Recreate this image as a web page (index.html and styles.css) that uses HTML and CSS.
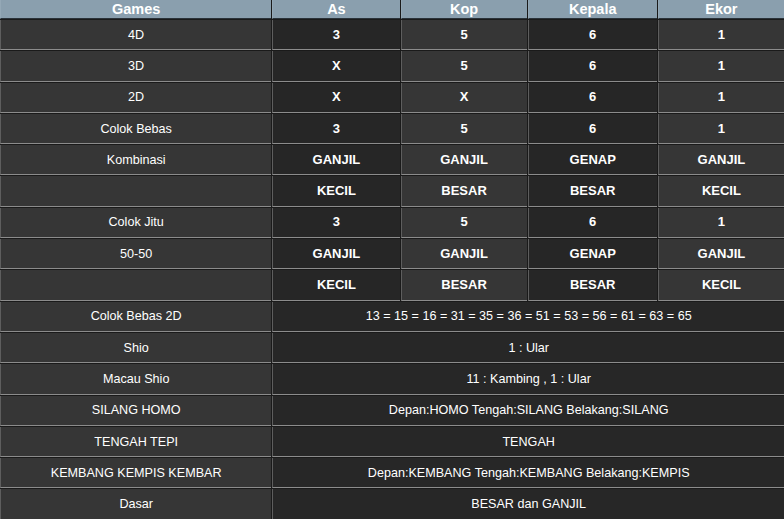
FILE: index.html
```html
<!DOCTYPE html>
<html>
<head>
<meta charset="utf-8">
<link rel="stylesheet" href="styles.css">
</head>
<body>
<table class="result">
  <thead>
    <tr><th class="c-game">Games</th><th class="c-as">As</th><th class="c-kop">Kop</th><th class="c-kep">Kepala</th><th class="c-ekor">Ekor</th></tr>
  </thead>
  <tbody>
    <tr><td class="name">4D</td><td class="v dk">3</td><td class="v lt">5</td><td class="v dk">6</td><td class="v lt">1</td></tr>
    <tr><td class="name">3D</td><td class="v dk">X</td><td class="v lt">5</td><td class="v dk">6</td><td class="v lt">1</td></tr>
    <tr><td class="name">2D</td><td class="v dk">X</td><td class="v lt">X</td><td class="v dk">6</td><td class="v lt">1</td></tr>
    <tr><td class="name">Colok Bebas</td><td class="v dk">3</td><td class="v lt">5</td><td class="v dk">6</td><td class="v lt">1</td></tr>
    <tr><td class="name">Kombinasi</td><td class="v dk">GANJIL</td><td class="v lt">GANJIL</td><td class="v dk">GENAP</td><td class="v lt">GANJIL</td></tr>
    <tr><td class="name"></td><td class="v dk">KECIL</td><td class="v lt">BESAR</td><td class="v dk">BESAR</td><td class="v lt">KECIL</td></tr>
    <tr><td class="name">Colok Jitu</td><td class="v dk">3</td><td class="v lt">5</td><td class="v dk">6</td><td class="v lt">1</td></tr>
    <tr><td class="name">50-50</td><td class="v dk">GANJIL</td><td class="v lt">GANJIL</td><td class="v dk">GENAP</td><td class="v lt">GANJIL</td></tr>
    <tr><td class="name"></td><td class="v dk">KECIL</td><td class="v lt">BESAR</td><td class="v dk">BESAR</td><td class="v lt">KECIL</td></tr>
    <tr><td class="name">Colok Bebas 2D</td><td class="wide" colspan="4">13 = 15 = 16 = 31 = 35 = 36 = 51 = 53 = 56 = 61 = 63 = 65</td></tr>
    <tr><td class="name">Shio</td><td class="wide" colspan="4">1 : Ular</td></tr>
    <tr><td class="name">Macau Shio</td><td class="wide" colspan="4">11 : Kambing , 1 : Ular</td></tr>
    <tr><td class="name">SILANG HOMO</td><td class="wide" colspan="4">Depan:HOMO Tengah:SILANG Belakang:SILANG</td></tr>
    <tr><td class="name">TENGAH TEPI</td><td class="wide" colspan="4">TENGAH</td></tr>
    <tr><td class="name">KEMBANG KEMPIS KEMBAR</td><td class="wide" colspan="4">Depan:KEMBANG Tengah:KEMBANG Belakang:KEMPIS</td></tr>
    <tr><td class="name">Dasar</td><td class="wide" colspan="4">BESAR dan GANJIL</td></tr>
  </tbody>
</table>
</body>
</html>
```
FILE: styles.css
```css
html, body {
  margin: 0;
  padding: 0;
  background: #1c1c1c;
}
.result {
  width: 786px;
  margin: -1px 0 0 -1px;
  border-collapse: separate;
  border-spacing: 1px;
  background: #1a1a1a;
  table-layout: fixed;
  font-family: "Liberation Sans", Arial, sans-serif;
  color: #ffffff;
  font-size: 12.6px;
}
.result th {
  background: #8a9fae;
  color: #ffffff;
  font-weight: bold;
  font-size: 14.5px;
  height: 17px;
  line-height: 18px;
  padding: 0;
  text-align: center;
  border-left: 1px solid #94a8b6;
  border-bottom: 1px solid #2a3239;
}
.c-game { width: 270px; }
.c-as { width: 126px; }
.c-kop { width: 125px; }
.c-kep { width: 128px; }
.c-ekor { width: 125px; }
.result td {
  height: 29.3px;
  padding: 0;
  text-align: center;
  vertical-align: middle;
  border-left: 1px solid #5e5e5e;
  border-bottom: 1px solid #8c8c8c;
  line-height: 16px;
}
.result td.name {
  background: #363636;
}
.result td.v {
  font-weight: bold;
  font-size: 13px;
}
.result td.dk {
  background: #262626;
}
.result td.lt {
  background: #363636;
}
.result td.wide {
  background: #272727;
}
```
